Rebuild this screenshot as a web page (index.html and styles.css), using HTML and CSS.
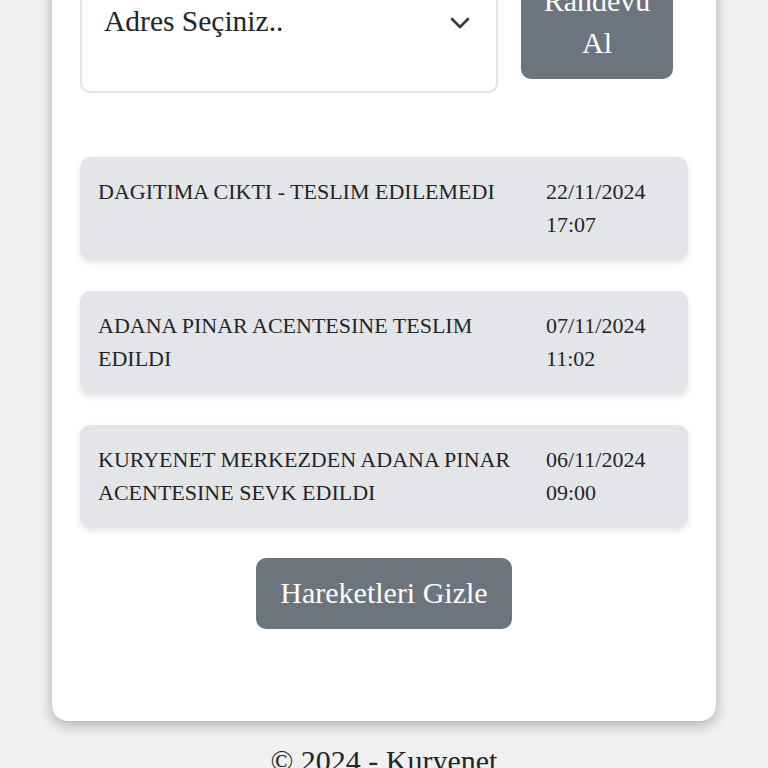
FILE: index.html
```html
<!DOCTYPE html>
<html lang="tr">
<head>
<meta charset="utf-8">
<title>Kuryenet</title>
<link rel="stylesheet" href="styles.css">
</head>
<body>
<div class="page">
  <div class="card">
    <div class="form-row">
      <div class="select">
        <span class="select-text">Adres Seçiniz..</span>
        <svg class="chevron" width="20" height="12" viewBox="0 0 20 12"><polyline points="2,2 10,10 18,2" fill="none" stroke="#343a40" stroke-width="2.6" stroke-linecap="round" stroke-linejoin="round"/></svg>
      </div>
      <button class="btn btn-appt">Randevu<br>Al</button>
    </div>
    <div class="moves">
      <div class="move">
        <div class="move-text">DAGITIMA CIKTI - TESLIM EDILEMEDI</div>
        <div class="move-date">22/11/2024<br>17:07</div>
      </div>
      <div class="move">
        <div class="move-text">ADANA PINAR ACENTESINE TESLIM EDILDI</div>
        <div class="move-date">07/11/2024<br>11:02</div>
      </div>
      <div class="move">
        <div class="move-text">KURYENET MERKEZDEN ADANA PINAR ACENTESINE SEVK EDILDI</div>
        <div class="move-date">06/11/2024<br>09:00</div>
      </div>
    </div>
    <div class="actions">
      <button class="btn btn-hide">Hareketleri Gizle</button>
    </div>
  </div>
  <footer class="footer">© 2024 - Kuryenet</footer>
</div>
</body>
</html>
```
FILE: styles.css
```css
html, body {
  margin: 0;
  padding: 0;
}
body {
  background: #f0f0f0;
  font-family: "Liberation Serif", "Times New Roman", serif;
  color: #212529;
  overflow: hidden;
}
.page {
  padding: 0 52px;
}
.card {
  margin-top: -78px;
  background: #ffffff;
  border-radius: 16px;
  padding: 28px 28px 92px;
  box-shadow: 0 4px 14px rgba(0, 0, 0, 0.28);
}
.form-row {
  display: flex;
  align-items: flex-start;
  gap: 23px;
}
.select {
  box-sizing: border-box;
  width: 418px;
  height: 143px;
  border: 2px solid #e3e3e3;
  border-radius: 10px;
  padding: 48px 26px 0 22px;
  display: flex;
  align-items: flex-start;
  justify-content: space-between;
  font-size: 29.5px;
  line-height: 42px;
  color: #212529;
}
.chevron {
  margin-top: 17px;
}
.btn {
  font-family: "Liberation Serif", "Times New Roman", serif;
  background: #6c757d;
  color: #ffffff;
  border: none;
  font-size: 30px;
  line-height: 42px;
  border-radius: 10px;
  cursor: pointer;
}
.btn-appt {
  margin-top: 17px;
  width: 152px;
  padding: 13px 16px 15px;
}
.moves {
  margin-top: 64px;
  display: flex;
  flex-direction: column;
  gap: 31px;
}
.move {
  display: flex;
  gap: 20px;
  background: #e4e5e8;
  border-radius: 10px;
  padding: 18px 18px 19px;
  font-size: 22px;
  line-height: 33px;
  box-shadow: 0 3px 6px rgba(0, 0, 0, 0.1);
}
.move-text {
  flex: 1;
}
.move-date {
  width: 124px;
  flex: none;
}
.actions {
  margin-top: 30px;
  display: flex;
  justify-content: center;
}
.btn-hide {
  padding: 14px 24px 15px;
}
.footer {
  text-align: center;
  padding-top: 19px;
  font-size: 30px;
  line-height: 42px;
  color: #212529;
}
```
